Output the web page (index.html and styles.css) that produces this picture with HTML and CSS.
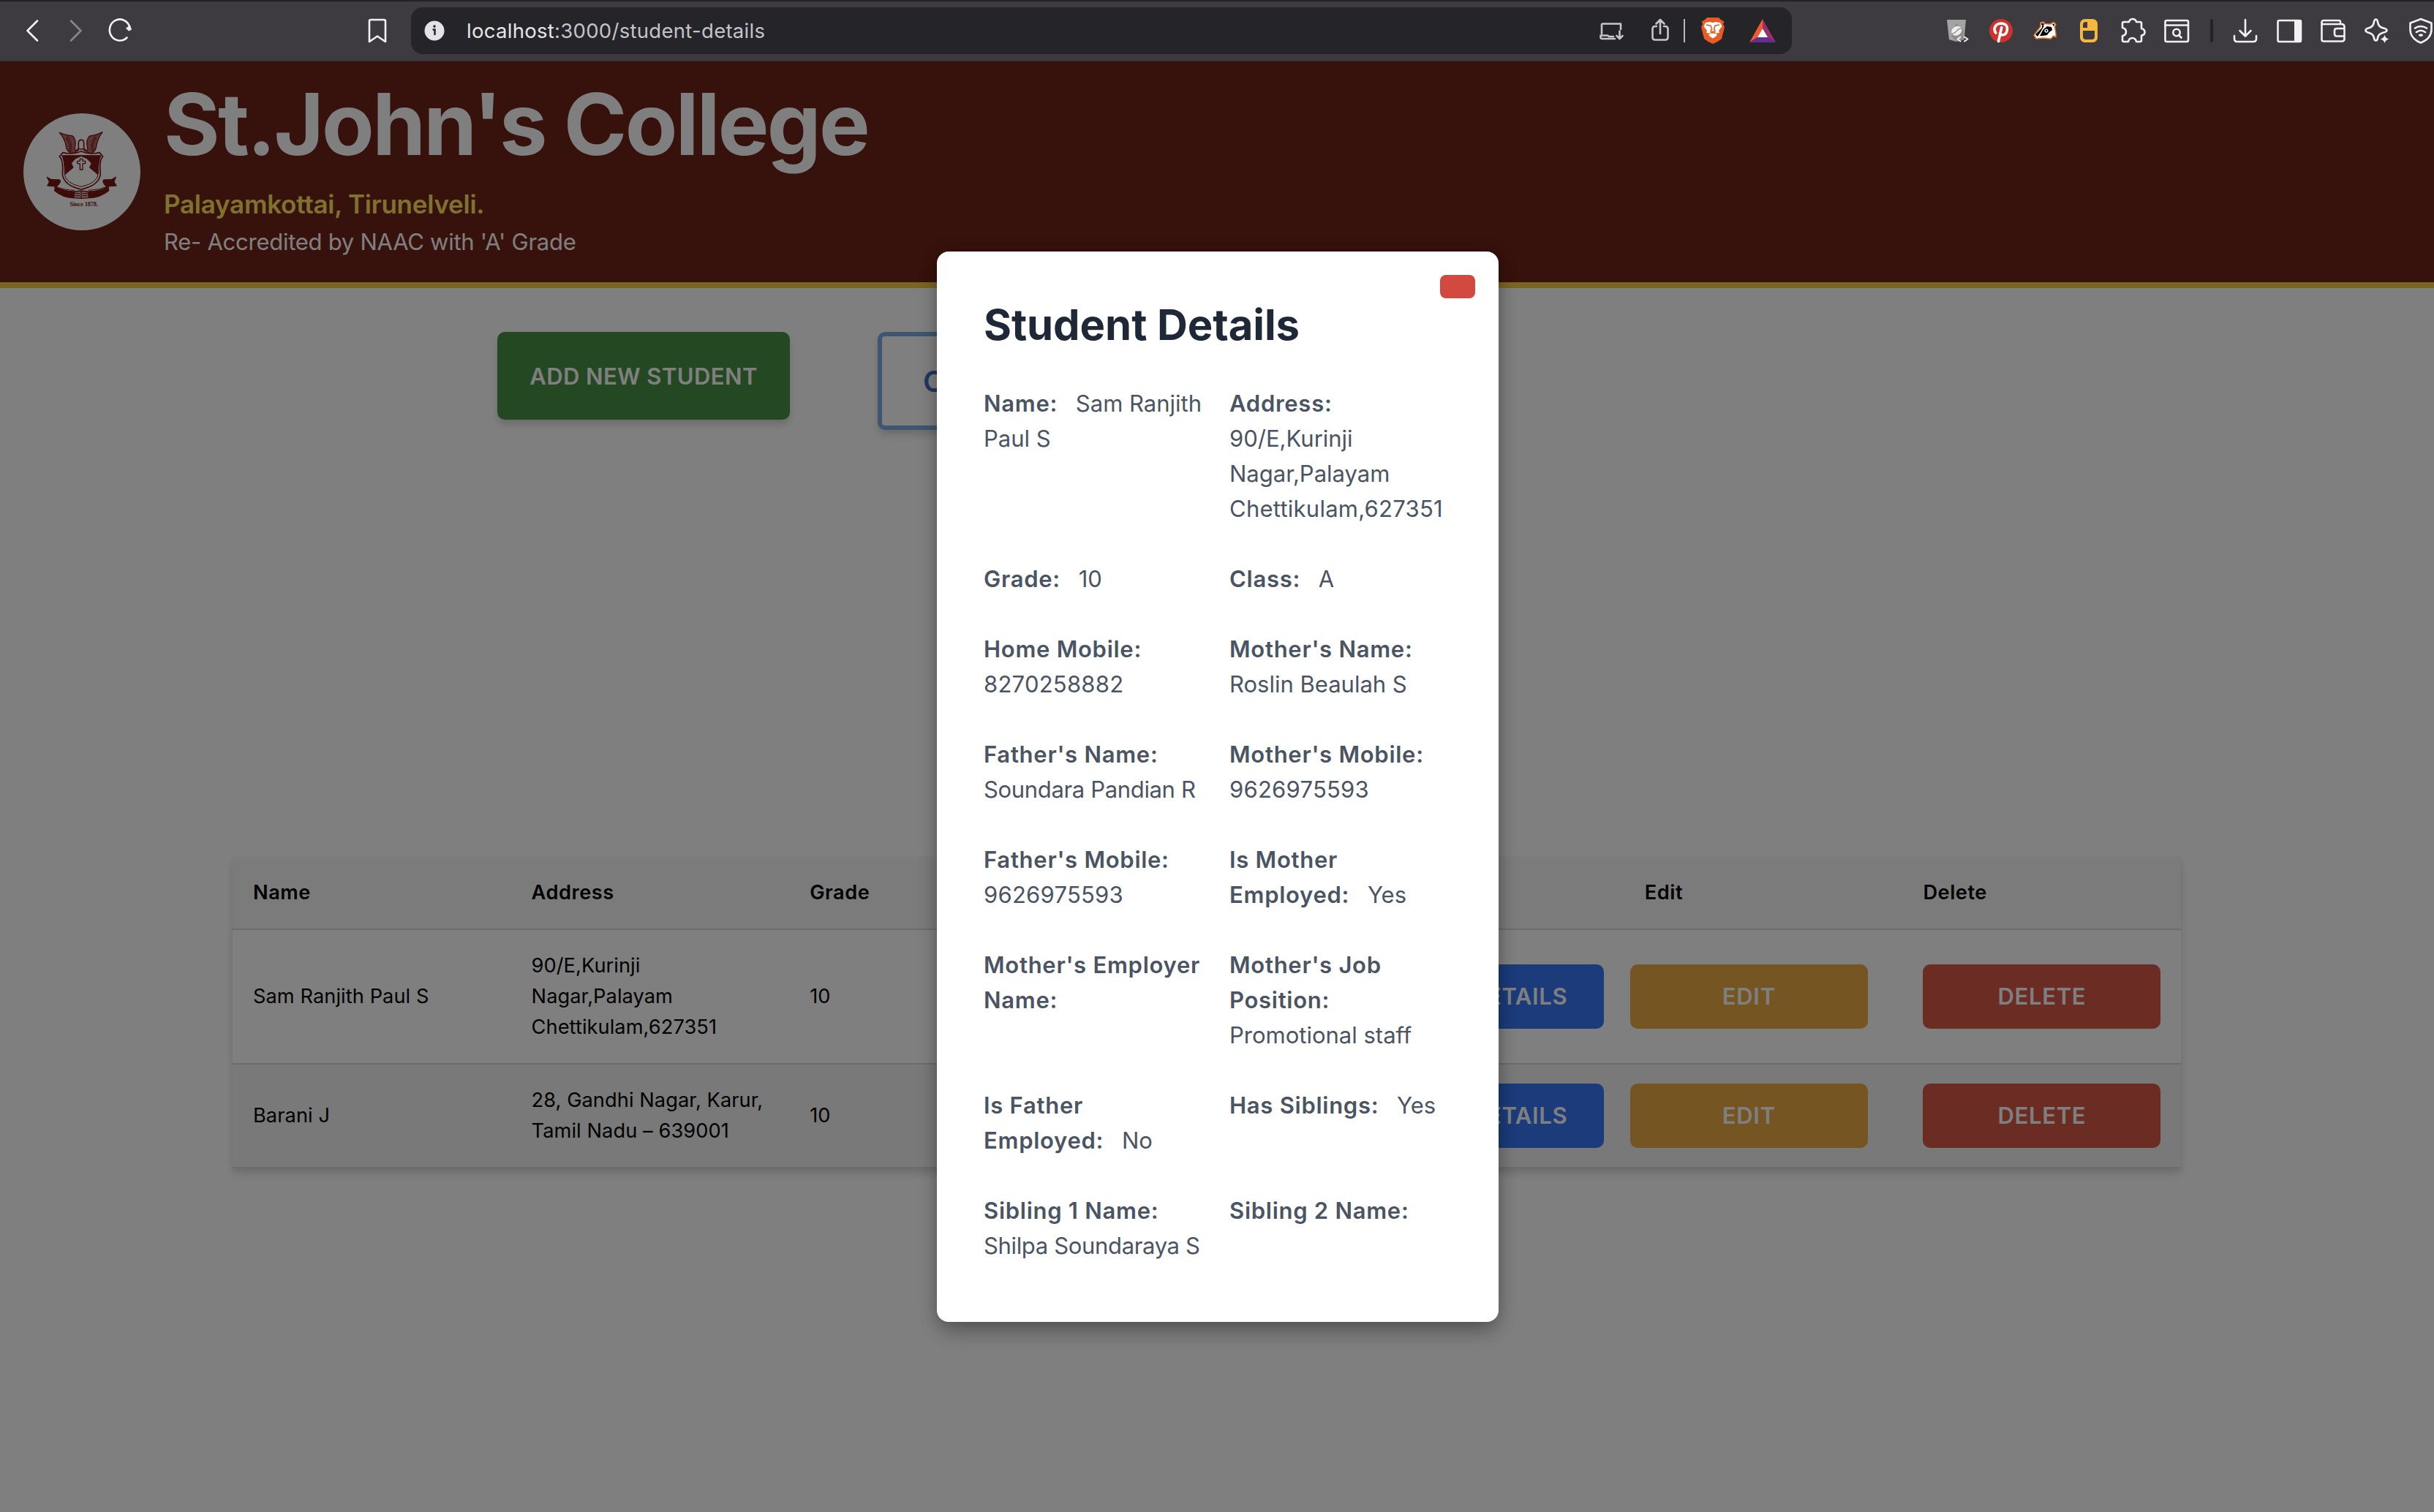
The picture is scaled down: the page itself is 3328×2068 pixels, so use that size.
FILE: index.html
```
<!DOCTYPE html>
<html lang="en">
<head>
<meta charset="utf-8">
<title>Student Details</title>
<link rel="stylesheet" href="styles.css">
</head>
<body>
<div class="browser-bar">
  <div class="nav-icons">
    <svg class="icon" viewBox="0 0 36 36"><path d="M25 4.500 11.500 18 25 31.500"/></svg>
    <svg class="icon dim" viewBox="0 0 36 36"><path d="M11 4.500 24.500 18 11 31.500"/></svg>
    <svg class="icon" viewBox="0 0 36 36"><path d="M27.500 27.500A14 14.500 0 1 1 31 12"/><path class="solid" d="M26 14.500 32 10.500 34 16.500 30 18.500Z"/></svg>
  </div>
  <svg class="icon bookmark" viewBox="0 0 36 36"><path d="M7 5Q7 3 9 3H27Q29 3 29 5V33L18 25.500 7 33Z"/></svg>
  <div class="url-bar">
    <svg class="info" viewBox="0 0 28 28"><circle cx="14" cy="14" r="13.500" fill="#e3e2e8"/><circle cx="14" cy="8" r="1.800" fill="#252429"/><path d="M11.500 12.500H14.500V20" stroke="#252429" stroke-width="2.500" fill="none"/></svg>
    <span class="url"><span class="host">localhost</span>:3000/student-details</span>
    <svg class="icon soft" viewBox="0 0 36 36"><path d="M4 22V10Q4 8.500 5.500 8.500H30V16M2.500 24.500V27Q2.500 29 5 29H22M2.500 24.500H12L14 26H20M28.500 18.500V28.500M24.500 25 28.500 29 32.500 25"/></svg>
    <svg class="icon soft share" viewBox="0 0 36 36"><path d="M13 12H11Q7.500 12 7.500 15.500V27Q7.500 30.500 11 30.500H25Q28.500 30.500 28.500 27V15.500Q28.500 12 25 12H23M18 22V3.500M12.500 8.500 18 3 23.500 8.500"/></svg>
    <span class="thin-rule"></span>
    <svg class="lion" viewBox="0 0 36 36"><path fill="#e95b25" d="M10 0H26L29 3 33.500 5.500 32 9 34 13 30 29Q24 34 18 36Q12 34 6 29L2 13 4 9 2.500 5.500 7 3Z"/><path fill="#fff" d="M8 7 14 6 18 7 22 6 28 7 30.500 12 26 18 27 21 22 21.500 18 18 14 21.500 9 21 10 18 5.500 12ZM12 23 18 21 24 23 22 26 18 28.500 14 26Z"/><path fill="none" stroke="#e95b25" stroke-width="1.600" d="M9 10 15 11 16.500 16 14.500 18.500M27 10 21 11 19.500 16 21.500 18.500M14.500 18.500 18 21 21.500 18.500"/></svg>
    <svg class="bat" viewBox="0 0 36 32"><path fill="#f15a33" d="M18 0V13L11 25 0 32Z"/><path fill="#992f6b" d="M18 0V13L25 25 36 32Z"/><path fill="#652f91" d="M0 32 11 25H25L36 32Z"/><path fill="#fff" d="M18 13 25 25H11Z"/></svg>
  </div>
  <div class="ext-icons">
    <svg class="icon" viewBox="0 0 36 36"><path fill="#a3a3a3" stroke="none" d="M4 3H30L27.500 30 17 33 7 30Z"/><path fill="#8c8c8c" stroke="none" d="M17 8 27 18 26 30 17 33 10 25Z"/><ellipse cx="17.300" cy="18.300" rx="7.500" ry="6" transform="rotate(-35 17.300 18.300)" fill="#eee" stroke="none"/><path stroke="#999" stroke-width="1.500" d="M11.500 22Q16 21 17.500 18 20 15 23.500 15"/><path stroke-width="2" d="M22.500 26.500 18.500 29.500 22.500 32.500M28 26.500 32.500 29.500 28 32.500"/></svg>
    <svg class="icon" viewBox="0 0 36 36"><circle cx="18" cy="18" r="16" fill="#d0312d" stroke="none"/><path stroke="#fff" stroke-width="3.600" d="M10.800 21Q8.500 18 9.200 14.500 11 8 18.500 8 26.500 8.500 26.500 15.500 26 23.500 20.500 23.800 17.500 23.800 16.500 21.500M18.800 13.500 14.500 32.500"/></svg>
    <svg class="icon" viewBox="0 0 36 36"><path fill="#fff" stroke="#d9772b" stroke-width="1.500" d="M3 24 12 12.500 12 7 16 6 18 8.500 25 9 30 6.500 33 9 31.500 13 33 22 33 27 30 25 26 29 15 28 6 29Z"/><path fill="#000" stroke="none" d="M5 23 14 14 14 10 17 11 12 20 8 26ZM11 25 16 16 21 12 27 13 28 17 24 20 21 24 15 25ZM13 8 16 7.500 17 10 13.500 10ZM28 9 31 8.500 30.500 12.500Z"/><circle cx="20" cy="18" r="2.600" fill="#fff" stroke="none"/><circle cx="20" cy="18" r="1.200" fill="#000" stroke="none"/></svg>
    <svg class="icon" viewBox="0 0 36 36"><rect x="6" y="2" width="24" height="32" rx="6.500" fill="#f4b840" stroke="none"/><path fill="#3b3a3f" stroke="none" d="M10 14V10Q10 6 14 6H16V14ZM10 18H26V26Q26 30 22 30H14Q10 30 10 26Z"/></svg>
    <svg class="icon" viewBox="0 0 36 36"><path d="M6 6H13Q14 2 18 2T23 6H28Q30 6 30 8V15Q34.500 16 34.500 20T30 24.500V31Q30 33 28 33H23Q22 28 17.500 28T12 33H6Q4 33 4 31V25Q9 24 9 19.500T4 14V8Q4 6 6 6Z"/></svg>
    <svg class="icon" viewBox="0 0 36 36"><rect x="2.500" y="4" width="31.500" height="29" rx="2"/><path d="M2.500 10.500H34M21 24 24.500 27.500"/><circle cx="18" cy="20.500" r="4.700"/></svg>
    <span class="thick-rule"></span>
    <svg class="icon" viewBox="0 0 36 36"><path d="M18 3V25M10.500 18 18 25.500 25.500 18M3 25V29Q3 33 7 33H29Q33 33 33 29V25"/></svg>
    <svg class="icon" viewBox="0 0 36 36"><rect x="2.500" y="4" width="31.500" height="29" rx="2"/><path class="solid" d="M25 3H33Q35 3 35 5V32Q35 34 33 34H25Z"/></svg>
    <svg class="icon" viewBox="0 0 36 36"><path d="M28 9V6Q28 4 26 4H5Q2.500 4 2.500 6.500V30Q2.500 32.500 5 32.500H30Q33.500 32.500 33.500 29V13Q33.500 9 30 9H3M33.500 15H23Q20 15 20 18V22Q20 25.500 23 25.500H33.500"/></svg>
    <svg class="icon" viewBox="0 0 36 36"><path d="M16.500 2.500Q18.500 2.500 19 6 20 13 27 14.500 31.500 15.500 31.500 17.500T27 20.500Q20 22 19 28 18.500 31.500 16.500 31.500T14 28Q13 22 6 20.500 2.500 19.500 2.500 17.500T6 14.500Q13 13 14 6 14.500 2.500 16.500 2.500Z"/><path class="solid" d="M28.500 23.500Q29.500 28.500 34.500 29.500 29.500 30.500 28.500 35 27.500 30.500 22.500 29.500 27.500 28.500 28.500 23.500Z"/></svg>
    <svg class="icon" viewBox="0 0 36 36"><path d="M18 2 32.500 7.500V17Q32 29 18 34.500 4 29 3.500 17V7.500ZM10 14.500Q18 9.500 26 14.500M12 20Q18 15.500 24 20"/><ellipse class="solid" cx="18" cy="24" rx="3" ry="1.800"/></svg>
  </div>
</div>

<div class="page">
  <header class="banner">
    <svg class="crest" viewBox="36 45 480 480">
      <circle cx="276" cy="285" r="240" fill="#fff"/>
      <g fill="none" stroke="#7a1814" stroke-width="5" stroke-linejoin="round">
        <path fill="#b56a66" stroke-width="4" d="M184 124Q205 134 238 138 254 152 248 184 240 200 262 196L236 210Q212 202 210 176 206 150 184 124ZM360 122Q340 134 308 138 292 152 298 184 306 200 284 196L312 210Q334 202 336 176 340 150 360 122Z"/>
        <path stroke-dasharray="4 4" stroke-width="14" d="M214 144Q232 165 228 200M332 144Q314 165 320 200"/>
        <path d="M262 190V166Q262 154 273 154T284 166V190M254 192H292"/>
        <path d="M198 206 184 222Q200 235 196 290 198 340 273 357 350 340 352 290 346 235 362 222L348 206Q310 216 273 201 236 216 198 206Z"/>
        <path stroke-width="3" d="M194 218H354Q342 240 344 290 340 332 273 346 206 332 204 290 206 240 194 218Z"/>
        <path fill="#7a1814" stroke="none" d="M196 219H352Q342 250 342 298L306 268 314 250 296 232 273 222 250 232 234 250 242 268 206 298Q206 250 196 219Z"/>
        <path fill="#fff" stroke-width="4" d="M268 232H279V241H290V251H279V276H268V251H257V241H268Z"/>
        <path fill="#7a1814" stroke-width="3" d="M132 306 150 316 186 318Q192 330 172 346L134 342 142 326ZM416 306 398 316 364 318Q358 330 376 346L418 342 408 326Z"/>
        <path fill="#7a1814" stroke-width="4" d="M166 346Q204 366 244 366L242 392Q196 390 164 362ZM384 346Q346 366 304 366L306 392Q352 390 386 362Z"/>
        <path stroke-width="3" d="M162 343Q200 360 246 361M388 343Q348 360 302 361M180 316Q160 334 170 348M368 316Q388 334 380 348"/>
        <path fill="#d9b5b3" stroke-width="4" d="M247 366 273 363 300 366 304 392 273 394 244 392ZM273 363V394M251 374H268M278 374H297M250 383H268M278 383H298"/>
      </g>
      <text x="284" y="425" text-anchor="middle" textLength="115" font-family="Liberation Serif, serif" font-weight="700" font-size="25" fill="#7a1814">Since 1878.</text>
    </svg>
    <div class="banner-text">
      <h1>St.John's College</h1>
      <p class="place">Palayamkottai, Tirunelveli.</p>
      <p class="accreditation">Re- Accredited by NAAC with 'A' Grade</p>
    </div>
  </header>

  <div class="actions">
    <button class="add-student">ADD NEW STUDENT</button>
    <button class="secondary">C</button>
  </div>

  <table class="students">
    <thead>
      <tr><th>Name</th><th>Address</th><th>Grade</th><th></th><th></th><th>Edit</th><th>Delete</th></tr>
    </thead>
    <tbody>
      <tr>
        <td>Sam Ranjith Paul S</td>
        <td>90/E,Kurinji<br>Nagar,Palayam<br>Chettikulam,627351</td>
        <td>10</td><td></td>
        <td><button class="row-btn view">VIEW DETAILS</button></td>
        <td><button class="row-btn edit">EDIT</button></td>
        <td><button class="row-btn delete">DELETE</button></td>
      </tr>
      <tr>
        <td>Barani J</td>
        <td>28, Gandhi Nagar, Karur,<br>Tamil Nadu – 639001</td>
        <td>10</td><td></td>
        <td><button class="row-btn view">VIEW DETAILS</button></td>
        <td><button class="row-btn edit">EDIT</button></td>
        <td><button class="row-btn delete">DELETE</button></td>
      </tr>
    </tbody>
  </table>

  <div class="overlay">
    <div class="modal">
      <button class="close" aria-label="Close"></button>
      <h2>Student Details</h2>
      <div class="fields">
        <p><b>Name:</b> Sam Ranjith<br>Paul S</p>
        <p><b>Address:</b><br>90/E,Kurinji<br>Nagar,Palayam<br><span class="num">Chettikulam,627351</span></p>
        <p><b>Grade:</b> 10</p>
        <p><b>Class:</b> A</p>
        <p><b>Home Mobile:</b><br><span class="num">8270258882</span></p>
        <p><b>Mother's Name:</b><br>Roslin Beaulah S</p>
        <p><b>Father's Name:</b><br><span class="snug">Soundara Pandian R</span></p>
        <p><b>Mother's Mobile:</b><br><span class="num">9626975593</span></p>
        <p><b>Father's Mobile:</b><br><span class="num">9626975593</span></p>
        <p><b>Is Mother<br>Employed:</b> Yes</p>
        <p><b>Mother's Employer<br>Name:</b></p>
        <p><b>Mother's Job<br>Position:</b><br>Promotional staff</p>
        <p><b>Is Father<br>Employed:</b> No</p>
        <p><b>Has Siblings:</b> Yes</p>
        <p><b>Sibling 1 Name:</b><br><span class="snug">Shilpa Soundaraya S</span></p>
        <p><b>Sibling 2 Name:</b></p>
      </div>
    </div>
  </div>
</div>
</body>
</html>
```
FILE: styles.css
```
* { box-sizing: border-box; margin: 0; padding: 0; }
html, body { height: 100%; overflow: hidden; }
body {
  display: flex;
  flex-direction: column;
  font-family: Inter, "Liberation Sans", sans-serif;
  background: #fff;
}
button { font: inherit; border: 0; }

/* Browser chrome */
.browser-bar {
  flex: none;
  display: flex;
  align-items: center;
  height: 84px;
  background: #3d3b40;
  border-top: 2px solid #232227;
  border-bottom: 2px solid #343337;
  padding-left: 26px;
  overflow: hidden;
}
.icon {
  flex: none;
  width: 36px;
  height: 36px;
  overflow: visible;
  fill: none;
  stroke: #f1f1f4;
  stroke-width: 2.6;
  stroke-linecap: round;
  stroke-linejoin: round;
}
.icon .solid { fill: #f1f1f4; stroke: none; }
.icon.dim { stroke: #86858a; }
.icon.soft { stroke: #c6c5cb; }
.nav-icons, .ext-icons { display: flex; align-items: center; gap: 24px; }
.nav-icons { width: 476px; }
.url-bar {
  flex: none;
  display: flex;
  align-items: center;
  width: 1888px;
  height: 64px;
  margin-left: 28px;
  padding-left: 18px;
  border-radius: 16px;
  background: #252429;
}
.info { width: 28px; height: 28px; }
.url {
  margin-left: 30px;
  width: 1548px;
  font-size: 27.5px;
  letter-spacing: 0.0105em;
  color: #c4c3c9;
}
.host { color: #e6e5ea; }
.share { margin-left: 30px; }
.thin-rule { width: 2px; height: 32px; margin-left: 14px; background: #b9b8bd; }
.lion { width: 36px; height: 36px; margin-left: 20px; }
.bat { width: 36px; height: 32px; margin-left: 32px; }
.ext-icons { flex: none; margin-left: 208px; }
.thick-rule { width: 4px; height: 32px; border-radius: 2px; background: #232227; margin: 0 2px 0 4px; }

/* Page */
.page { position: relative; flex: 1; }
.banner {
  display: flex;
  align-items: center;
  gap: 32px;
  height: 310px;
  padding-left: 32px;
  background: #6f2218;
  border-bottom: 8px solid #f5cd44;
}
.crest { width: 160px; height: 160px; }
.banner-text { padding-bottom: 6px; color: #fff; }
h1 { font-size: 117px; line-height: 120px; font-weight: 700; letter-spacing: -0.0231em; margin-bottom: 21px; }
.place { font-size: 35px; line-height: 56px; font-weight: 600; letter-spacing: -0.0071em; color: #fee45e; }
.accreditation { font-size: 31px; line-height: 48px; letter-spacing: -0.0085em; }

.actions { display: flex; align-items: flex-start; gap: 120px; padding: 60px 0 0 680px; }
.add-student, .secondary {
  border-radius: 10px;
  font-weight: 600;
  box-shadow: 0 8px 12px rgba(0, 0, 0, .1), 0 4px 8px rgba(0, 0, 0, .06);
}
.add-student { width: 400px; height: 120px; background: #489044; color: #fff; font-size: 31px; letter-spacing: 0.0131em; }
.secondary {
  width: 460px;
  height: 134px;
  padding-left: 56px;
  text-align: left;
  border: 6px solid #7cacde;
  background: #fff;
  color: #406ebe;
  font-size: 40px;
}

.students {
  width: 2664px;
  margin: 584px 0 0 318px;
  table-layout: fixed;
  border-collapse: separate;
  border-spacing: 0;
  font-size: 27.2px;
  line-height: 42px;
  letter-spacing: 0.003em;
  color: #000;
  background: #fff;
  box-shadow: 0 8px 12px rgba(0, 0, 0, .1), 0 4px 8px rgba(0, 0, 0, .06);
}
.students th, .students td {
  padding: 28px;
  text-align: left;
  vertical-align: middle;
  border-bottom: 2px solid #d8d8d8;
}
.students th { font-weight: 600; letter-spacing: 0.02em; background: #f7f7f7; }
.students tbody tr:nth-child(2) { background: #f2f2f2; }
.row-btn {
  display: block;
  width: 325px;
  height: 88px;
  margin: -2px 0;
  border-radius: 10px;
  font-size: 31px;
  font-weight: 600;
  letter-spacing: 0.022em;
  color: #fff;
}
.view { background: #3676f4; }
.edit { position: relative; left: -20px; background: #eaaa42; }
.delete { background: #d45846; }

/* Dialog */
.overlay {
  position: absolute;
  inset: 0;
  display: flex;
  align-items: flex-start;
  padding: 260px 0 0 1281px;
  background: rgba(0, 0, 0, .5);
}
.modal {
  position: relative;
  width: 768px;
  height: 1464px;
  padding: 64px;
  border-radius: 16px;
  background: #fff;
  box-shadow: 0 20px 30px -6px rgba(0, 0, 0, .2), 0 4px 24px rgba(0, 0, 0, .25);
}
.close {
  position: absolute;
  top: 32px;
  right: 32px;
  width: 48px;
  height: 32px;
  border-radius: 8px;
  background: #d1493f;
}
h2 { font-size: 58px; line-height: 72px; font-weight: 700; color: #1f2837; margin-bottom: 48px; letter-spacing: -0.0012em; }
.fields {
  display: grid;
  grid-template-columns: 1fr 1fr;
  gap: 48px 32px;
  font-size: 31px;
  line-height: 48px;
  color: #4b5462;
}
.fields p { white-space: nowrap; }
.fields b { font-weight: 600; letter-spacing: 0.0235em; margin-right: 16px; }
.num { letter-spacing: 0.008em; }
.snug { letter-spacing: -0.011em; }
```
